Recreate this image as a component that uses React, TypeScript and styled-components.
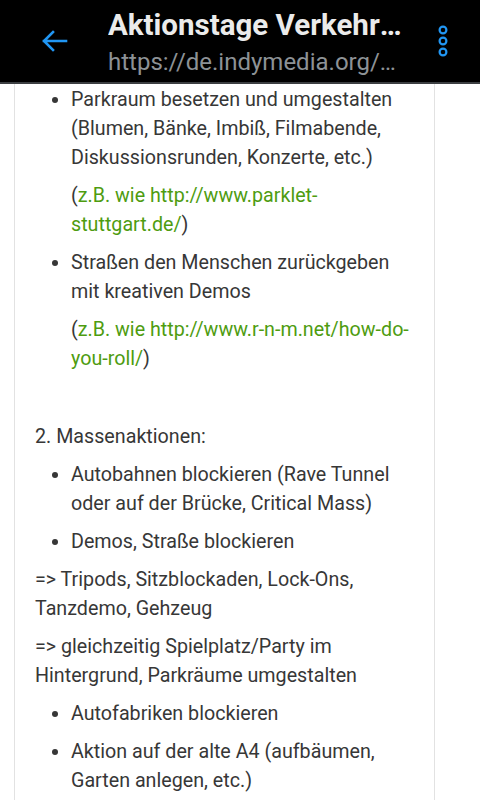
import styled, { createGlobalStyle } from "styled-components";

const GlobalStyle = createGlobalStyle`
  html, body {
    margin: 0;
    padding: 0;
    background: #ffffff;
  }
  body {
    font-family: Roboto, "Noto Sans", sans-serif;
  }
`;

const Page = styled.div`
  width: 480px;
  height: 800px;
  overflow: hidden;
  background: #ffffff;
`;

const TopBar = styled.header`
  display: flex;
  align-items: center;
  height: 82px;
  background: #000000;
  border-bottom: 2px solid #3c3f42;
`;

const IconButton = styled.button`
  display: flex;
  align-items: center;
  justify-content: center;
  width: ${({ $w }) => $w}px;
  height: 82px;
  padding: 0;
  border: 0;
  background: transparent;
  color: #2196f3;
`;

const TitleBlock = styled.div`
  display: flex;
  flex-direction: column;
  align-self: flex-start;
  width: 298px;
  margin-right: auto;
  padding-top: 7px;
`;

const Title = styled.div`
  font-size: 29.5px;
  font-weight: 700;
  line-height: 36px;
  color: #ebebeb;
  white-space: nowrap;
  overflow: hidden;
  text-overflow: ellipsis;
`;

const Url = styled.div`
  font-size: 24px;
  line-height: 38px;
  color: #8d9296;
  white-space: nowrap;
  overflow: hidden;
  text-overflow: ellipsis;
`;

const Article = styled.article`
  width: 421px;
  margin-left: 14px;
  padding: 1px 20px 0;
  box-sizing: border-box;
  height: 716px;
  border-left: 1px solid #e2e2e2;
  border-right: 1px solid #e2e2e2;
  color: #373737;
  font-size: 19.7px;
  line-height: 29px;
`;

const List = styled.ul`
  margin: 0;
  padding-left: 36px;
`;

const Item = styled.li`
  margin: 0 0 9px;
`;

const Para = styled.p`
  margin: ${({ $gap }) => ($gap ? "49px" : "0")} 0 9px;
`;

const ItemNote = styled.p`
  margin: 9px 0 0;
`;

const Link = styled.a`
  color: #4e9c10;
  text-decoration: none;
`;

export default function App() {
  return (
    <Page>
      <GlobalStyle />
      <TopBar>
        <IconButton $w={108}>
          <svg width="28" height="24" viewBox="0 0 28 24">
            <path
              d="M26 12H4M13 3L4 12l9 9"
              fill="none"
              stroke="currentColor"
              strokeWidth="2.6"
              strokeLinecap="square"
            />
          </svg>
        </IconButton>
        <TitleBlock>
          <Title>Aktionstage Verkehrswende Stuttgart</Title>
          <Url>https://de.indymedia.org/node/12345</Url>
        </TitleBlock>
        <IconButton $w={74}>
          <svg width="12" height="34" viewBox="0 0 12 34">
            <circle cx="6" cy="6" r="3.4" fill="none" stroke="currentColor" strokeWidth="2.2" />
            <circle cx="6" cy="17" r="3.4" fill="none" stroke="currentColor" strokeWidth="2.2" />
            <circle cx="6" cy="28" r="3.4" fill="none" stroke="currentColor" strokeWidth="2.2" />
          </svg>
        </IconButton>
      </TopBar>

      <Article>
        <List>
          <Item>
            Parkraum besetzen und umgestalten (Blumen, Bänke, Imbiß, Filmabende,
            Diskussionsrunden, Konzerte, etc.)
            <ItemNote>
              (<Link href="#">z.B. wie http://www.parklet-stuttgart.de/</Link>)
            </ItemNote>
          </Item>
          <Item>
            Straßen den Menschen zurückgeben mit kreativen Demos
            <ItemNote>
              (<Link href="#">z.B. wie http://www.r-n-m.net/how-do-you-roll/</Link>)
            </ItemNote>
          </Item>
        </List>

        <Para $gap>2. Massenaktionen:</Para>
        <List>
          <Item>Autobahnen blockieren (Rave Tunnel oder auf der Brücke, Critical Mass)</Item>
          <Item>Demos, Straße blockieren</Item>
        </List>
        <Para>=&gt; Tripods, Sitzblockaden, Lock-Ons, Tanzdemo, Gehzeug</Para>
        <Para>=&gt; gleichzeitig Spielplatz/Party im Hintergrund, Parkräume umgestalten</Para>
        <List>
          <Item>Autofabriken blockieren</Item>
          <Item>Aktion auf der alte A4 (aufbäumen, Garten anlegen, etc.)</Item>
        </List>
      </Article>
    </Page>
  );
}
